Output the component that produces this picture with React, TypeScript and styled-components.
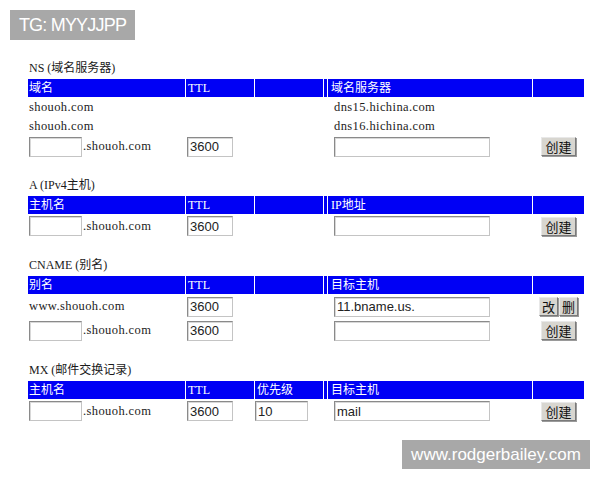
import React from "react";
import styled, { createGlobalStyle } from "styled-components";

const GlobalStyle = createGlobalStyle`
  html, body {
    margin: 0;
    padding: 0;
    background: #ffffff;
  }
  body {
    font-family: "Liberation Serif", "Noto Sans CJK SC", serif;
    color: #111111;
  }
`;

const COLUMNS = "157px 68px 68px 3px 204px 51px";

const S = {
  Page: styled.div`
    position: relative;
    width: 600px;
    height: 480px;
    overflow: hidden;
    padding: 60px 0 0 28px;
    box-sizing: border-box;
    display: flex;
    flex-direction: column;
    gap: 20px;
  `,
  Section: styled.section`
    display: flex;
    flex-direction: column;
    gap: 3px;
  `,
  Title: styled.div`
    font-size: 12px;
    line-height: 16px;
    padding-left: 1px;
    font-family: "Liberation Serif", "Noto Sans CJK SC", serif;
    color: #1a1a1a;
  `,
  Grid: styled.div`
    display: grid;
    grid-template-columns: ${COLUMNS};
    column-gap: 1px;
    row-gap: 1px;
  `,
  Head: styled.div<{ $pad?: number }>`
    background: #0000f5;
    color: #ffffff;
    height: 18px;
    font-size: 12px;
    line-height: 18px;
    padding-left: ${(p) => p.$pad ?? 2}px;
    white-space: nowrap;
    font-family: "Liberation Serif", "Noto Sans CJK SC", serif;
  `,
  Cell: styled.div<{ $h: number; $pad?: number; $center?: boolean }>`
    height: ${(p) => p.$h}px;
    display: flex;
    align-items: center;
    justify-content: ${(p) => (p.$center ? "center" : "flex-start")};
    padding-left: ${(p) => p.$pad ?? 1}px;
    font-size: 12.5px;
    letter-spacing: 0.4px;
    white-space: nowrap;
    color: #1c1c1c;
  `,
  Input: styled.input<{ $w: number }>`
    width: ${(p) => p.$w}px;
    height: 20px;
    box-sizing: border-box;
    border: 1px solid #8a8a8a;
    border-right-color: #c4c4c4;
    border-bottom-color: #c4c4c4;
    box-shadow: inset 1px 1px 0 #d8d8d8;
    padding: 0 2px;
    margin: 0;
    font-family: "Liberation Sans", Arial, sans-serif;
    font-size: 13px;
    color: #222222;
    background: #ffffff;
    outline: none;
  `,
  Suffix: styled.span`
    margin-left: 1px;
  `,
  Buttons: styled.div`
    display: flex;
    gap: 1px;
  `,
  Button: styled.button<{ $pad?: number }>`
    height: 19px;
    padding: 0 ${(p) => p.$pad ?? 3}px;
    margin: 0;
    box-sizing: border-box;
    border: 1px solid #7a7a7a;
    border-top-color: #e8e8e8;
    border-left-color: #e8e8e8;
    background: #d8d6d0;
    font-family: "Noto Sans CJK SC", sans-serif;
    font-size: 13px;
    line-height: 15px;
    color: #111111;
    box-shadow: 1px 1px 0 #9a9a9a;
  `,
  Mark: styled.div<{ $left: number; $top: number; $w: number; $h: number; $size: number; $spacing: number }>`
    position: absolute;
    left: ${(p) => p.$left}px;
    top: ${(p) => p.$top}px;
    width: ${(p) => p.$w}px;
    height: ${(p) => p.$h}px;
    background: #a8a8a8;
    color: #ffffff;
    font-family: "Liberation Sans", Arial, sans-serif;
    font-size: ${(p) => p.$size}px;
    letter-spacing: ${(p) => p.$spacing}px;
    display: flex;
    align-items: center;
    justify-content: center;
  `,
};

type Head = { first: string; third?: string; value: string };

function Header({ first, third, value }: Head) {
  return (
    <>
      <S.Head $pad={1}>{first}</S.Head>
      <S.Head>TTL</S.Head>
      <S.Head>{third ?? ""}</S.Head>
      <S.Head $pad={0} />
      <S.Head $pad={3}>{value}</S.Head>
      <S.Head />
    </>
  );
}

function TextRow({ name, value }: { name: string; value: string }) {
  return (
    <>
      <S.Cell $h={18}>{name}</S.Cell>
      <S.Cell $h={18} />
      <S.Cell $h={18} />
      <S.Cell $h={18} $pad={0} />
      <S.Cell $h={18} $pad={6}>
        {value}
      </S.Cell>
      <S.Cell $h={18} />
    </>
  );
}

function InputRow({
  name,
  priority,
  value = "",
  edit,
  h = 21,
}: {
  name?: string;
  priority?: string;
  value?: string;
  edit?: boolean;
  h?: number;
}) {
  return (
    <>
      <S.Cell $h={h}>
        {name ? (
          name
        ) : (
          <>
            <S.Input $w={53} defaultValue="" />
            <S.Suffix>.shouoh.com</S.Suffix>
          </>
        )}
      </S.Cell>
      <S.Cell $h={h}>
        <S.Input $w={46} defaultValue="3600" />
      </S.Cell>
      <S.Cell $h={h} $pad={0}>
        {priority !== undefined && <S.Input $w={53} defaultValue={priority} />}
      </S.Cell>
      <S.Cell $h={h} $pad={0} />
      <S.Cell $h={h} $pad={6}>
        <S.Input $w={156} defaultValue={value} />
      </S.Cell>
      <S.Cell $h={h} $pad={0} $center>
        {edit ? (
          <S.Buttons>
            <S.Button $pad={2}>改</S.Button>
            <S.Button $pad={2}>删</S.Button>
          </S.Buttons>
        ) : (
          <S.Button>创建</S.Button>
        )}
      </S.Cell>
    </>
  );
}

export default function App() {
  return (
    <>
      <GlobalStyle />
      <S.Page>
        <S.Section>
          <S.Title>NS (域名服务器)</S.Title>
          <S.Grid>
            <Header first="域名" value="域名服务器" />
            <TextRow name="shouoh.com" value="dns15.hichina.com" />
            <TextRow name="shouoh.com" value="dns16.hichina.com" />
            <InputRow />
          </S.Grid>
        </S.Section>

        <S.Section>
          <S.Title>A (IPv4主机)</S.Title>
          <S.Grid>
            <Header first="主机名" value="IP地址" />
            <InputRow h={22} />
          </S.Grid>
        </S.Section>

        <S.Section>
          <S.Title>CNAME (别名)</S.Title>
          <S.Grid>
            <Header first="别名" value="目标主机" />
            <InputRow name="www.shouoh.com" value="11.bname.us." edit h={23} />
            <InputRow h={23} />
          </S.Grid>
        </S.Section>

        <S.Section>
          <S.Title>MX (邮件交换记录)</S.Title>
          <S.Grid>
            <Header first="主机名" third="优先级" value="目标主机" />
            <InputRow priority="10" value="mail" h={22} />
          </S.Grid>
        </S.Section>

        <S.Mark $left={10} $top={10} $w={125} $h={30} $size={18} $spacing={-0.8}>
          TG: MYYJJPP
        </S.Mark>
        <S.Mark $left={402} $top={440} $w={188} $h={29} $size={17} $spacing={0}>
          www.rodgerbailey.com
        </S.Mark>
      </S.Page>
    </>
  );
}
